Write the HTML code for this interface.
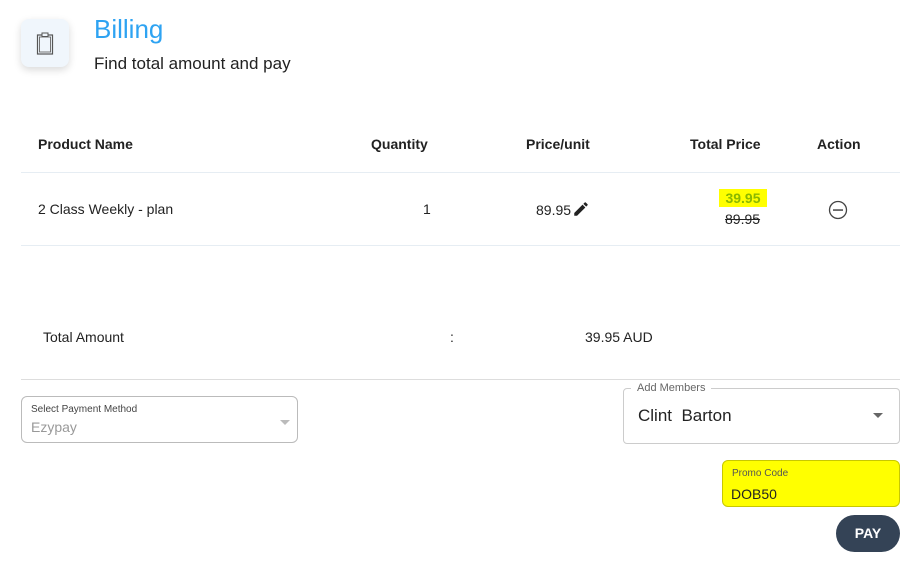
<!DOCTYPE html>
<html><head><meta charset="utf-8"><style>
*{margin:0;padding:0;box-sizing:border-box}
body{width:916px;height:562px;background:#fff;font-family:"Liberation Sans",sans-serif;color:#222;position:relative;overflow:hidden}
.a{position:absolute}
.icon{left:21px;top:19px;width:48px;height:48px;border-radius:8px;background:#f0f6fc;box-shadow:0 3px 8px rgba(0,0,0,.15)}
.h{font-size:14px;font-weight:bold;color:#222}
.t{font-size:14px}
.line{height:1px;background:#e6edf3;left:21px;width:879px}
</style></head><body>
<div class="a icon"><svg width="48" height="48" viewBox="0 0 48 48"><rect x="16.5" y="16" width="15" height="19" fill="none" stroke="#555" stroke-width="1.2"/><rect x="18.5" y="18" width="11" height="15" fill="none" stroke="#666" stroke-width="0.9"/><rect x="21" y="14" width="6" height="3.5" fill="#f0f6fc" stroke="#555" stroke-width="1"/></svg></div>
<div class="a" style="left:94px;top:14px;font-size:26px;color:#2ea3f2">Billing</div>
<div class="a" style="left:94px;top:54px;font-size:17px;color:#222">Find total amount and pay</div>

<div class="a h" style="left:38px;top:136px">Product Name</div>
<div class="a h" style="left:371px;top:136px">Quantity</div>
<div class="a h" style="left:526px;top:136px">Price/unit</div>
<div class="a h" style="left:690px;top:136px">Total Price</div>
<div class="a h" style="left:817px;top:136px">Action</div>
<div class="a line" style="top:172px"></div>

<div class="a t" style="left:38px;top:201px">2 Class Weekly - plan</div>
<div class="a t" style="left:423px;top:201px">1</div>
<div class="a t" style="left:536px;top:202px">89.95</div>
<svg class="a" style="left:572px;top:200px" width="18" height="18" viewBox="0 0 24 24"><path d="M3 17.25V21h3.75L17.81 9.94l-3.75-3.75L3 17.25zM20.71 7.04a1 1 0 000-1.41l-2.34-2.34a1 1 0 00-1.41 0l-1.83 1.83 3.75 3.75 1.83-1.83z" fill="#222"/></svg>
<div class="a" style="left:719px;top:189px;width:48px;height:18px;background:#ffff00;color:#8ab800;font-weight:bold;font-size:14px;text-align:center;line-height:18px">39.95</div>
<div class="a t" style="left:725px;top:211px;text-decoration:line-through">89.95</div>
<svg class="a" style="left:828px;top:200px" width="20" height="20" viewBox="0 0 20 20"><circle cx="10" cy="10" r="8.5" fill="none" stroke="#444" stroke-width="1.3"/><rect x="5" y="9.3" width="10" height="1.5" fill="#444"/></svg>
<div class="a line" style="top:245px"></div>

<div class="a t" style="left:43px;top:329px">Total Amount</div>
<div class="a t" style="left:450px;top:329px">:</div>
<div class="a t" style="left:585px;top:329px">39.95 AUD</div>
<div class="a" style="top:379px;left:21px;width:879px;height:1px;background:#ddd"></div>

<div class="a" style="left:21px;top:396px;width:277px;height:47px;border:1px solid #bbb;border-radius:6px"></div>
<div class="a" style="left:31px;top:404px;font-size:10px;color:#444">Select Payment Method</div>
<div class="a" style="left:31px;top:419px;font-size:14px;color:#999">Ezypay</div>
<div class="a" style="left:280px;top:420px;border-left:5px solid transparent;border-right:5px solid transparent;border-top:5px solid #bbb"></div>

<div class="a" style="left:623px;top:388px;width:277px;height:56px;border:1px solid #ccc;border-radius:4px"></div>
<div class="a" style="left:631px;top:382px;padding:0 6px;background:#fff;font-size:11px;color:#666">Add Members</div>
<div class="a" style="left:638px;top:406px;font-size:17px;color:#222">Clint&nbsp; Barton</div>
<div class="a" style="left:873px;top:413px;border-left:5px solid transparent;border-right:5px solid transparent;border-top:5px solid #666"></div>

<div class="a" style="left:722px;top:460px;width:178px;height:47px;background:#ffff00;border:1px solid #c8c800;border-radius:6px"></div>
<div class="a" style="left:732px;top:468px;font-size:10px;color:#555">Promo Code</div>
<div class="a" style="left:731px;top:486px;font-size:14px;color:#222">DOB50</div>

<div class="a" style="left:836px;top:515px;width:64px;height:37px;border-radius:19px;background:#344356;color:#fff;font-weight:bold;font-size:14px;text-align:center;line-height:37px">PAY</div>
</body></html>
